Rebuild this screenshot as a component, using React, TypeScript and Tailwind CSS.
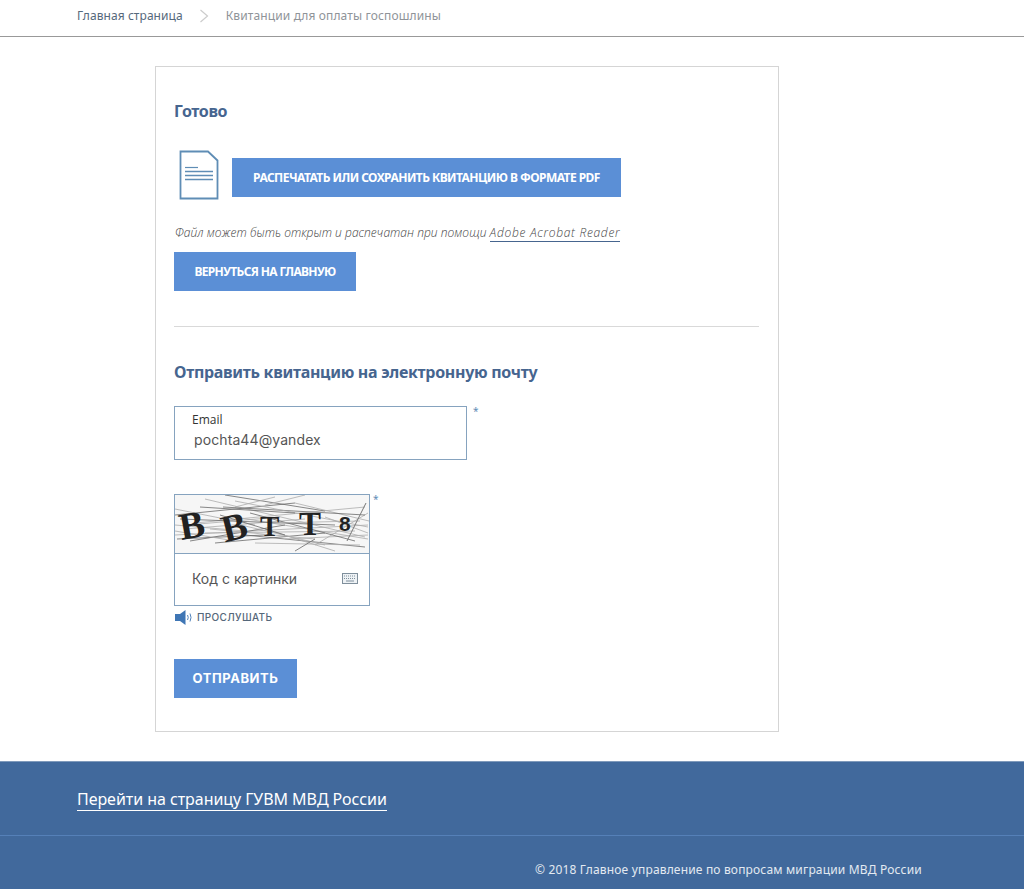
import React from 'react';

const noiseLines = [
  [0, 20, 120, 8], [20, 28, 190, 12], [30, 4, 190, 42], [50, 0, 150, 16], [0, 40, 193, 30],
  [10, 34, 130, 24], [70, 40, 190, 52], [90, 34, 160, 56], [120, 8, 194, 26], [40, 48, 150, 38],
  [0, 14, 80, 30], [60, 22, 193, 44], [15, 46, 110, 30], [100, 2, 60, 12], [140, 50, 193, 18],
  [48, 12, 190, 20], [80, 48, 185, 50], [0, 30, 70, 36], [2, 44, 90, 40], [30, 38, 180, 36],
  [60, 6, 193, 32], [5, 24, 160, 30], [110, 44, 193, 40], [66, 30, 150, 50], [25, 12, 120, 18],
  [130, 0, 90, 10], [0, 36, 60, 46], [75, 18, 180, 46], [35, 34, 140, 44], [150, 22, 193, 38],
  [45, 20, 110, 40], [95, 28, 185, 26], [12, 30, 105, 22], [120, 56, 140, 44],
];

const CaptchaImage = () => (
  <svg width="194" height="58" viewBox="0 0 194 58" className="block">
    <rect width="194" height="58" fill="#f6f6f6" />
    {noiseLines.map(([x1, y1, x2, y2], i) => (
      <line key={i} x1={x1} y1={y1} x2={x2} y2={y2} stroke={i % 3 === 0 ? '#6a6a6a' : '#acacac'} strokeWidth="0.8" />
    ))}
    <line x1="172" y1="46" x2="191" y2="8" stroke="#777" strokeWidth="1" />
    <g fontFamily="'Liberation Serif', serif" fontWeight="700" fill="#222">
      <text x="4" y="43" fontSize="38" transform="rotate(-10 16 30)">B</text>
      <text x="46" y="45" fontSize="38" transform="rotate(-14 58 30)">B</text>
      <text x="85" y="41" fontSize="29">T</text>
      <text x="124" y="40" fontSize="33">T</text>
      <text x="164" y="36" fontSize="21" fontFamily="'Liberation Sans', sans-serif">8</text>
    </g>
  </svg>
);

const FileIcon = () => (
  <svg width="40" height="50" viewBox="0 0 40 50" fill="none" stroke="#5f8db5" className="shrink-0">
    <path d="M1.5 1.5H29L38.5 10.5V48.5H1.5Z" strokeWidth="1.8" />
    <path d="M6 17.5H19" strokeWidth="1.2" />
    <path d="M6 21.5H34M6 25.5H34M6 29.5H34" strokeWidth="1.4" />
  </svg>
);

const PrimaryButton = ({ children, className }: { children: React.ReactNode; className: string }) => (
  <button className={`h-[39px] bg-[#5b8fd6] text-white text-xs font-bold flex items-center justify-center ${className}`}>
    {children}
  </button>
);

export default function App() {
  return (
    <div className="h-[889px] w-[1024px] bg-white font-['Noto_Sans',sans-serif] overflow-hidden flex flex-col">
      <nav className="h-[37px] shrink-0 border-b border-[#999] pl-[77px] pb-[5px] flex items-center text-xs">
        <span className="text-[#56697c] tracking-[0.07px]">Главная страница</span>
        <svg width="10" height="14" viewBox="0 0 10 14" fill="none" stroke="#ccc" strokeWidth="1.2" className="ml-[16px] mr-[17px]">
          <path d="M1.5 1L8.5 7L1.5 13" />
        </svg>
        <span className="text-[#8f9499] tracking-[0.12px]">Квитанции для оплаты госпошлины</span>
      </nav>

      <main className="flex-1 pt-[29px] pl-[155px]">
        <section className="w-[624px] h-[666px] border border-[#d5d5d5] pt-[33px] pl-[18px] pr-[19px]">
          <h2 className="text-base leading-[22px] font-bold text-[#46658f] tracking-[-0.4px]">Готово</h2>

          <div className="mt-[28px] flex items-start pl-[5px]">
            <FileIcon />
            <PrimaryButton className="ml-[13px] mt-[8px] w-[389px] tracking-[-0.55px]">
              РАСПЕЧАТАТЬ ИЛИ СОХРАНИТЬ КВИТАНЦИЮ В ФОРМАТЕ PDF
            </PrimaryButton>
          </div>

          <p className="mt-[23px] ml-[1px] h-[20px] text-xs leading-[20px] font-light italic text-[#444] font-['Open_Sans',sans-serif] whitespace-nowrap tracking-[0.03px]">
            Файл может быть открыт и распечатан при помощи{' '}
            <a className="inline-block leading-[17px] border-b border-[#46658f] text-[#444] tracking-[0.7px]">Adobe Acrobat Reader</a>
          </p>

          <PrimaryButton className="mt-[9px] w-[182px] tracking-[-0.65px]">ВЕРНУТЬСЯ НА ГЛАВНУЮ</PrimaryButton>

          <hr className="mt-[35px] border-0 border-t border-[#d9d9d9]" />

          <h2 className="mt-[34px] text-base leading-[22px] font-bold text-[#46658f] tracking-[-0.3px]">
            Отправить квитанцию на электронную почту
          </h2>

          <div className="mt-[23px] flex items-start">
            <div className="w-[293px] h-[54px] border border-[#86a3bf] pl-[17px] pt-[5px]">
              <div className="text-xs leading-[15px] text-[#333] font-['Open_Sans',sans-serif]">Email</div>
              <div className="mt-[3px] ml-[2px] text-sm leading-[19px] text-[#555] font-['Inter',sans-serif] tracking-[0.1px]">pochta44@yandex</div>
            </div>
            <span className="ml-[6px] text-[10px] leading-[10px] text-[#5f8db5]">*</span>
          </div>

          <div className="mt-[34px] flex items-start">
            <div className="w-[196px] h-[112px] border border-[#86a3bf]">
              <CaptchaImage />
              <div className="h-[52px] border-t border-[#86a3bf] pl-[17px] pr-[11px] pb-[2px] flex items-center justify-between">
                <span className="text-sm text-[#555] font-['Inter',sans-serif]">Код с картинки</span>
                <svg width="16" height="11" viewBox="0 0 16 11" fill="#eef2f5" stroke="#7f8f9c" strokeWidth="1">
                  <rect x="0.5" y="0.5" width="15" height="10" />
                  <path d="M2 3H14M2 5.5H14" strokeDasharray="1 1" />
                  <path d="M4 8H12" />
                </svg>
              </div>
            </div>
            <span className="ml-[3px] text-[10px] leading-[10px] text-[#5f8db5]">*</span>
          </div>

          <div className="mt-[3px] ml-[1px] h-[17px] flex items-center">
            <svg width="18" height="15" viewBox="0 0 18 15" fill="#3f76b5">
              <path d="M0 4H5L10.5 0V15L5 11H0Z" />
              <path d="M12.5 5Q14 7.5 12.5 10M15 3.5Q17 7.5 15 11.5" fill="none" stroke="#3f76b5" strokeWidth="0.9" />
            </svg>
            <span className="ml-[4px] text-[10px] font-medium text-[#55677a] font-['Inter',sans-serif] tracking-[0.35px]">ПРОСЛУШАТЬ</span>
          </div>

          <PrimaryButton className="mt-[33px] w-[123px] text-[13px] font-['Inter',sans-serif] tracking-[0.55px]">ОТПРАВИТЬ</PrimaryButton>
        </section>
      </main>

      <footer className="h-[128px] shrink-0 bg-[#41699c] border-t border-[#7f9abb]">
        <div className="h-[74px] border-b border-[#5580b8] pl-[77px] pt-[25px]">
          <a className="inline-block text-base leading-[22px] text-white border-b border-white tracking-[-0.05px]">
            Перейти на страницу ГУВМ МВД России
          </a>
        </div>
        <div className="pt-[25px] pl-[535px] text-xs leading-[18px] text-[#e3e9f1] whitespace-nowrap tracking-[0.17px]">
          © 2018 Главное управление по вопросам миграции МВД России
        </div>
      </footer>
    </div>
  );
}
